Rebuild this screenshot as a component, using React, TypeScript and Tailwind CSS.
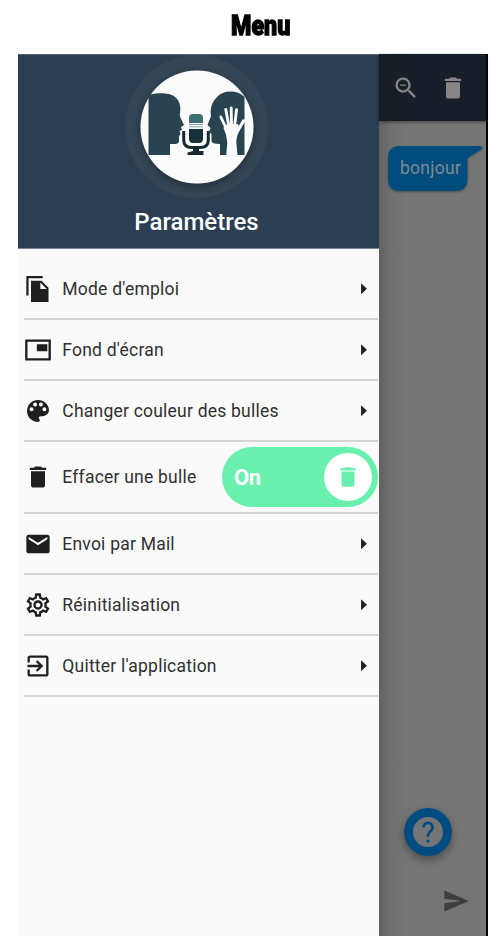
import React from "react";

const paths = {
  copy: "M16 .8H2V17.500h1.900V2.700H16V.8zm-1 4.200l6 6v12.200H6V5h9zm-1 7h5.500L14 6.500V12z",
  pip: "M20 7h-9v6h9V7zm3-4H1v18h22V3zm-2 16H3V5h18v14z",
  palette:
    "M12 2.600c-5.200 0-9.400 4.200-9.400 9.400s4.200 9.400 9.400 9.400c.9 0 1.500-.67 1.500-1.500 0-.39-.15-.74-.39-1.010-.23-.26-.38-.61-.38-.99 0-.83.67-1.500 1.500-1.500H16c2.960 0 5.400-2.240 5.400-5.200 0-4.620-4.230-8.600-9.400-8.600zM6.500 12.200a1.700 1.700 0 1 1 0-3.400 1.700 1.700 0 0 1 0 3.400zm3-4a1.700 1.700 0 1 1 0-3.400 1.700 1.700 0 0 1 0 3.400zm5 0a1.700 1.700 0 1 1 0-3.400 1.700 1.700 0 0 1 0 3.400zm3 4a1.700 1.700 0 1 1 0-3.400 1.700 1.700 0 0 1 0 3.400z",
  trash: "M6 19c0 1.100.9 2 2 2h8c1.100 0 2-.9 2-2V7H6v12zM19 4h-3.500l-1-1h-5l-1 1H5v2h14V4z",
  mail: "M20 4H4c-1.100 0-1.990.9-1.990 2L2 18c0 1.100.9 2 2 2h16c1.100 0 2-.9 2-2V6c0-1.100-.9-2-2-2zm0 4l-8 5-8-5V6l8 5 8-5v2z",
  gear: "M19.430 12.980c.04-.32.07-.64.07-.98s-.03-.66-.07-.98l2.110-1.650c.19-.15.24-.42.12-.64l-2-3.460c-.09-.16-.26-.25-.44-.25-.06 0-.12.01-.17.03l-2.490 1c-.52-.4-1.080-.73-1.690-.98l-.38-2.650C14.460 2.180 14.250 2 14 2h-4c-.25 0-.46.18-.49.42l-.38 2.650c-.61.25-1.170.59-1.690.98l-2.490-1c-.06-.02-.12-.03-.18-.03-.17 0-.34.09-.43.25l-2 3.460c-.13.22-.07.49.12.64l2.110 1.650c-.04.32-.07.65-.07.98s.03.66.07.98l-2.110 1.650c-.19.15-.24.42-.12.64l2 3.460c.09.16.26.25.44.25.06 0 .12-.01.17-.03l2.490-1c.52.4 1.080.73 1.690.98l.38 2.650c.03.24.24.42.49.42h4c.25 0 .46-.18.49-.42l.38-2.650c.61-.25 1.170-.59 1.690-.98l2.490 1c.06.02.12.03.18.03.17 0 .34-.09.43-.25l2-3.460c.12-.22.07-.49-.12-.64l-2.110-1.650zm-1.980-1.710c.04.31.05.52.05.73s-.02.43-.05.73l-.14 1.130.89.7 1.080.84-.7 1.210-1.270-.51-1.040-.42-.9.680c-.43.32-.84.56-1.250.73l-1.060.43-.16 1.130-.2 1.350h-1.400l-.19-1.350-.16-1.130-1.060-.43c-.43-.18-.83-.41-1.230-.71l-.91-.7-1.060.43-1.270.51-.7-1.210 1.080-.84.89-.7-.14-1.130c-.03-.31-.05-.54-.05-.74s.02-.43.05-.73l.14-1.130-.89-.7-1.080-.84.7-1.210 1.270.51 1.040.42.9-.68c.43-.32.84-.56 1.250-.73l1.060-.43.16-1.130.2-1.350h1.390l.19 1.350.16 1.130 1.060.43c.43.18.83.41 1.230.71l.91.7 1.060-.43 1.270-.51.7 1.210-1.070.85-.89.7.14 1.130zM12 8c-2.210 0-4 1.790-4 4s1.790 4 4 4 4-1.790 4-4-1.790-4-4-4zm0 6c-1.100 0-2-.9-2-2s.9-2 2-2 2 .9 2 2-.9 2-2 2z",
  exit: "M10.090 15.590L11.500 17l5-5-5-5-1.410 1.410L12.670 11H3v2h9.670l-2.580 2.590zM19 3H5c-1.110 0-2 .9-2 2v4h2V5h14v14H5v-4H3v4c0 1.100.89 2 2 2h14c1.100 0 2-.9 2-2V5c0-1.100-.9-2-2-2z",
  arrow: "M9.300 16.800l5.400-5.100-5.400-5.100v10.200z",
  zoomOut:
    "M15.500 14h-.79l-.28-.27C15.410 12.590 16 11.110 16 9.500 16 5.910 13.090 3 9.500 3S3 5.910 3 9.500 5.910 16 9.500 16c1.610 0 3.090-.59 4.230-1.570l.27.28v.79l5 4.990L20.490 19l-4.990-5zm-6 0C7.010 14 5 11.990 5 9.500S7.010 5 9.500 5 14 7.010 14 9.500 11.990 14 9.500 14zM7 9h5v1H7z",
  help: "M12 2C6.480 2 2 6.480 2 12s4.480 10 10 10 10-4.480 10-10S17.520 2 12 2zm.9 17.100h-1.900v-1.900h1.900v1.900zm2.050-7.650l-.9.920C13.250 13.200 12.850 13.700 12.850 15.200h-1.800v-.5c0-1.100.45-2.200 1.170-2.930l1.240-1.260c.4-.4.640-.9.640-1.500 0-1.200-.95-2.150-2.100-2.150s-2.100.95-2.100 2.150H8.100c0-2.210 1.690-4 3.900-4s3.900 1.790 3.900 4c0 .88-.4 1.880-.95 2.440z",
  send: "M2.010 21L23 12 2.010 3 2 10l15 2-15 2z",
};

type IconName = keyof typeof paths;

function Icon({ name, className }: { name: IconName; className: string }) {
  return (
    <svg viewBox="0 0 24 24" fill="currentColor" className={"shrink-0 " + className}>
      <path d={paths[name]} />
    </svg>
  );
}

function Logo() {
  return (
    <svg viewBox="0 0 114 114" className="size-[114px]">
      <circle cx="57" cy="57" r="56.500" fill="#fbfbfb" />
      <path
        fill="#294350"
        d="M8.500 25C17 22.500 30 22.500 35 27C40 31 41 37 40 43C39 47 42 50 44 55L41 57L42 60L39.500 61L40.500 64L39 66V71Q39 74 35 74H30V85H8.500Z"
      />
      <path
        fill="#294350"
        d="M104.500 27C97 19.500 83 20 77 27C71 33 70 40 71 46L67.500 55L70.500 58L69 62L71.500 64L71.500 71Q71.500 74 80 74V85H104.500Z"
      />
      <g fill="none" stroke="#fbfbfb" strokeLinecap="round" strokeLinejoin="round">
        <path d="M80.800 47L87 60M85.800 39.500L89 57M91.200 38L91.500 57M96.500 39.800L94.500 57" strokeWidth="2.900" />
        <path d="M103.500 51L97 62" strokeWidth="3.200" />
      </g>
      <path d="M84.500 55L98 54L100 59Q96.500 66 96.300 72L97.500 85.500H86.200L87.300 73Q87 65 83.500 58Z" fill="#fbfbfb" />
      <path d="M49 53V48Q49 44 53 44H59Q63 44 63 48V53Z" fill="#3d6e74" />
      <path d="M49 54h14v1H49zM49 56.200h14v1H49z" fill="#8fa2a6" />
      <path d="M49 59h14v9.500Q63 73 59 73H53Q49 73 49 68.500Z" fill="#172f36" />
      <path d="M43.700 61V70Q43.700 77.500 52 77.500H60Q68.300 77.500 68.300 70V61" fill="none" stroke="#142a31" strokeWidth="3" />
      <path d="M53 78h6v3h4.500v4H47.500v-2.500L53 81z" fill="#142a31" />
    </svg>
  );
}

function Row({ icon, label }: { icon: IconName; label: string }) {
  return (
    <li className="flex h-[61.2px] items-center border-b-2 border-[#d4d4d4] pt-[1px]">
      <Icon name={icon} className="size-7 text-[#1f1f1f]" />
      <span className="ml-[10.8px] flex-1 whitespace-nowrap">{label}</span>
      <Icon name="arrow" className="mr-[1px] size-[26px] text-[#1f1f1f]" />
    </li>
  );
}

export default function App() {
  return (
    <div className="flex h-[947px] w-[501px] flex-col overflow-hidden bg-white font-[Roboto,sans-serif]">
      <h1 className="flex h-[54px] items-center justify-center pb-[3px] pl-[21px] font-[Impact,Roboto,sans-serif] text-[28px] leading-none font-black">
        <span className="inline-block scale-x-[0.83] [-webkit-text-stroke:1.3px_black]">Menu</span>
      </h1>
      <div className="ml-[18px] flex h-[882px] w-[470px]">
        <aside className="flex w-[361px] flex-col bg-[#fafafa]">
          <header className="flex h-[195px] flex-col items-center border-t border-b border-t-[#5b6876] border-b-[#7b8794] bg-[#2c3e52] pr-[4px]">
            <div className="flex size-[143px] items-center justify-center rounded-full bg-[#344555]">
              <div className="rounded-full shadow-[0_2px_7px_rgba(0,0,0,0.35)]">
                <Logo />
              </div>
            </div>
            <h2 className="mt-[8px] text-[24px] leading-[32px] font-medium text-white">Paramètres</h2>
          </header>
          <ul className="mr-[1px] ml-[5.500px] pt-[9.8px] text-[17.500px] tracking-[0.22px] text-[#303030]">
            <Row icon="copy" label="Mode d'emploi" />
            <Row icon="pip" label="Fond d'écran" />
            <Row icon="palette" label="Changer couleur des bulles" />
            <li className="flex h-[71.500px] items-center border-b-2 border-[#d4d4d4]">
              <Icon name="trash" className="size-7 text-[#1f1f1f]" />
              <span className="ml-[10.8px] flex-1 whitespace-nowrap">Effacer une bulle</span>
              <button className="flex h-[60px] w-[156px] shrink-0 items-center justify-between rounded-full bg-[#69f0ae] pr-[6px] pl-[12px] text-[22px] font-bold tracking-[-0.3px] text-white">
                <span>On</span>
                <span className="flex size-12 items-center justify-center rounded-full bg-white text-[#69f0ae]">
                  <Icon name="trash" className="size-[26px]" />
                </span>
              </button>
            </li>
            <Row icon="mail" label="Envoi par Mail" />
            <Row icon="gear" label="Réinitialisation" />
            <Row icon="exit" label="Quitter l'application" />
          </ul>
        </aside>
        <main className="flex w-[109px] flex-col border-r-2 border-black bg-[linear-gradient(90deg,#626262_0,#707070_12px,#757575_28px)]">
          <header className="flex h-[67px] items-center bg-[linear-gradient(90deg,#171a24_0,#171f25_18px,#171e29_30px)] pl-[13px] text-[#858585] shadow-[0_1px_3px_rgba(0,0,0,0.45)]">
            <Icon name="zoomOut" className="size-7" />
            <Icon name="trash" className="ml-[19px] size-7" />
          </header>
          <div className="relative mt-[23.500px] ml-[9px] h-[47px] w-[96px]">
            <svg viewBox="0 0 96 47" className="absolute inset-0 h-[47px] w-[96px] drop-shadow-[0_1px_1px_rgba(0,0,0,0.3)]">
              <path d="M12 1H92Q96 2 94 4L79.500 13V34Q79.500 46 67.500 46H12Q0 46 0 34V13Q0 1 12 1Z" fill="#004c7d" />
            </svg>
            <span className="relative block pl-[12px] text-[17.500px] leading-[47px] tracking-[0.28px] text-[#7f8b93]">bonjour</span>
          </div>
          <div className="mt-auto mb-[31px] ml-[25px] flex size-12 items-center justify-center rounded-full bg-[#004c80] text-[#757575] shadow-[0_4px_9px_rgba(0,0,0,0.35)]">
            <Icon name="help" className="size-9" />
          </div>
          <Icon name="send" className="mb-[21px] ml-[63px] size-7 text-[#3d3d3d]" />
        </main>
      </div>
    </div>
  );
}
